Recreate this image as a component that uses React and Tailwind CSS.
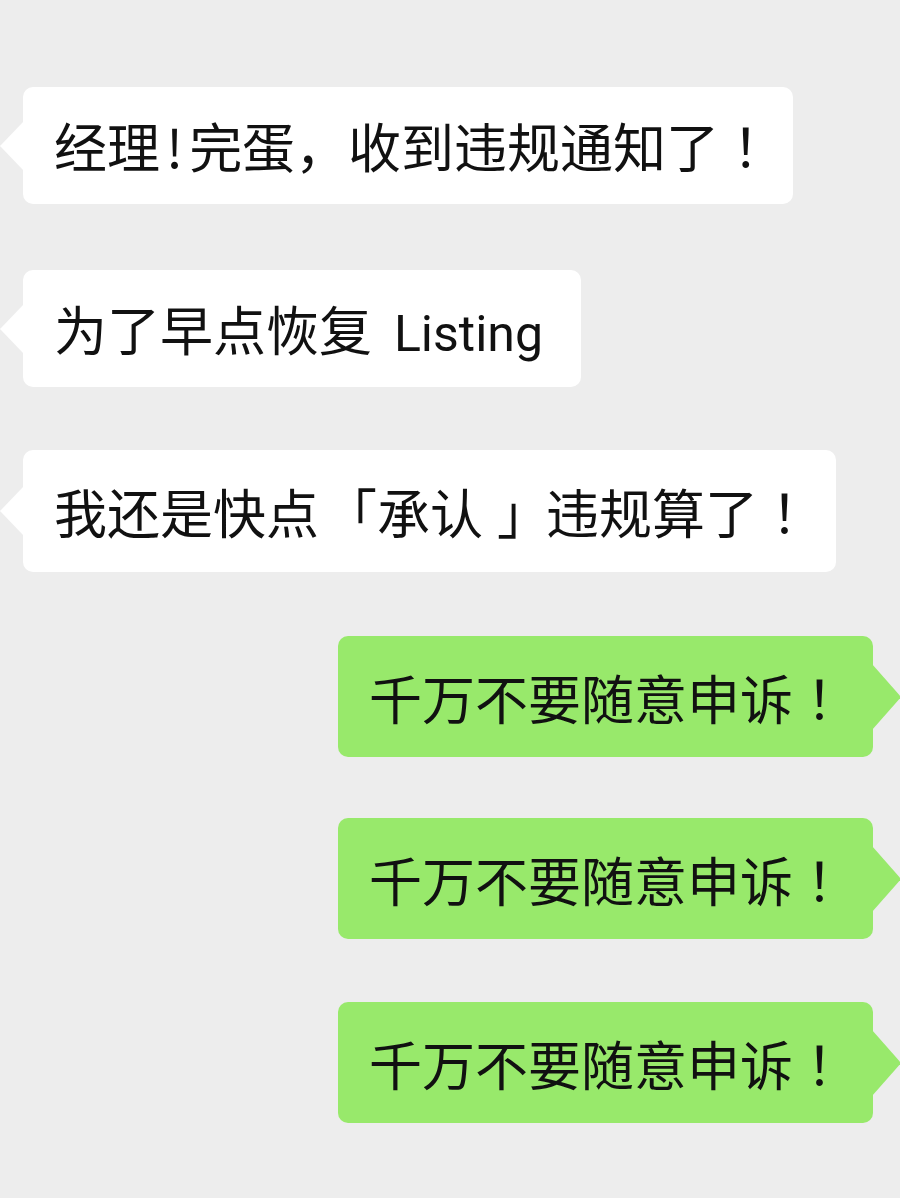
import React from 'react';

const FONT = '"Noto Sans CJK SC", "Noto Sans", sans-serif';

// full-width punctuation sits centred / on the outer side in the screenshot
const P = ({ children, className = '' }) => (
  <span lang="ja" className={`font-['Noto_Sans_CJK_JP'] ${className}`}>
    {children}
  </span>
);

const Tail = ({ side, color }) =>
  side === 'left' ? (
    <svg className="absolute left-[-23px] top-1/2 -translate-y-1/2" width="24" height="50" viewBox="0 0 24 50">
      <polygon points="24,0 0,25 24,50" fill={color} />
    </svg>
  ) : (
    <svg className="absolute right-[-28px] top-1/2 -translate-y-1/2" width="29" height="66" viewBox="0 0 29 66">
      <polygon points="0,0 29,33 0,66" fill={color} />
    </svg>
  );

const Bubble = ({ children, mine, className }) => (
  <div
    className={`relative whitespace-nowrap rounded-[10px] text-[53px] leading-[60px] text-[#111] ${
      mine ? 'self-end mr-[27px] bg-[#98e96b] pl-[31px] pr-[27px] pt-[31px] pb-[30px]' : 'self-start ml-[23px] bg-white pl-[31px]'
    } ${className}`}
  >
    <Tail side={mine ? 'right' : 'left'} color={mine ? '#98e96b' : '#ffffff'} />
    {children}
  </div>
);

const Appeal = ({ className }) => (
  <Bubble mine className={className}>
    千万不要随意申诉<P>！</P>
  </Bubble>
);

export default function App() {
  return (
    <div className="flex min-h-[1198px] w-[900px] flex-col overflow-hidden bg-[#ededed] pt-[87px]" style={{ fontFamily: FONT }}>
      <Bubble className="pr-[21px] pt-[28px] pb-[29px]">
        经理<span className="mx-[6px]">!</span>完蛋，收到违规通知了<P>！</P>
      </Bubble>
      <Bubble className="mt-[66px] pr-[38px] pt-[28px] pb-[28px]">
        为了早点恢复 <span className="ml-[10px] font-['Roboto'] text-[50px] leading-none">Listing</span>
      </Bubble>
      <Bubble className="mt-[63px] pr-[25px] pt-[31px] pb-[31px]">
        我还是快点<P className="inline-block w-[58px] text-right">「</P>承认
        <P className="mr-[10px] inline-block translate-x-[14px]">」</P>违规算了<P>！</P>
      </Bubble>
      <Appeal className="mt-[64px]" />
      <Appeal className="mt-[61px]" />
      <Appeal className="mt-[63px]" />
    </div>
  );
}
